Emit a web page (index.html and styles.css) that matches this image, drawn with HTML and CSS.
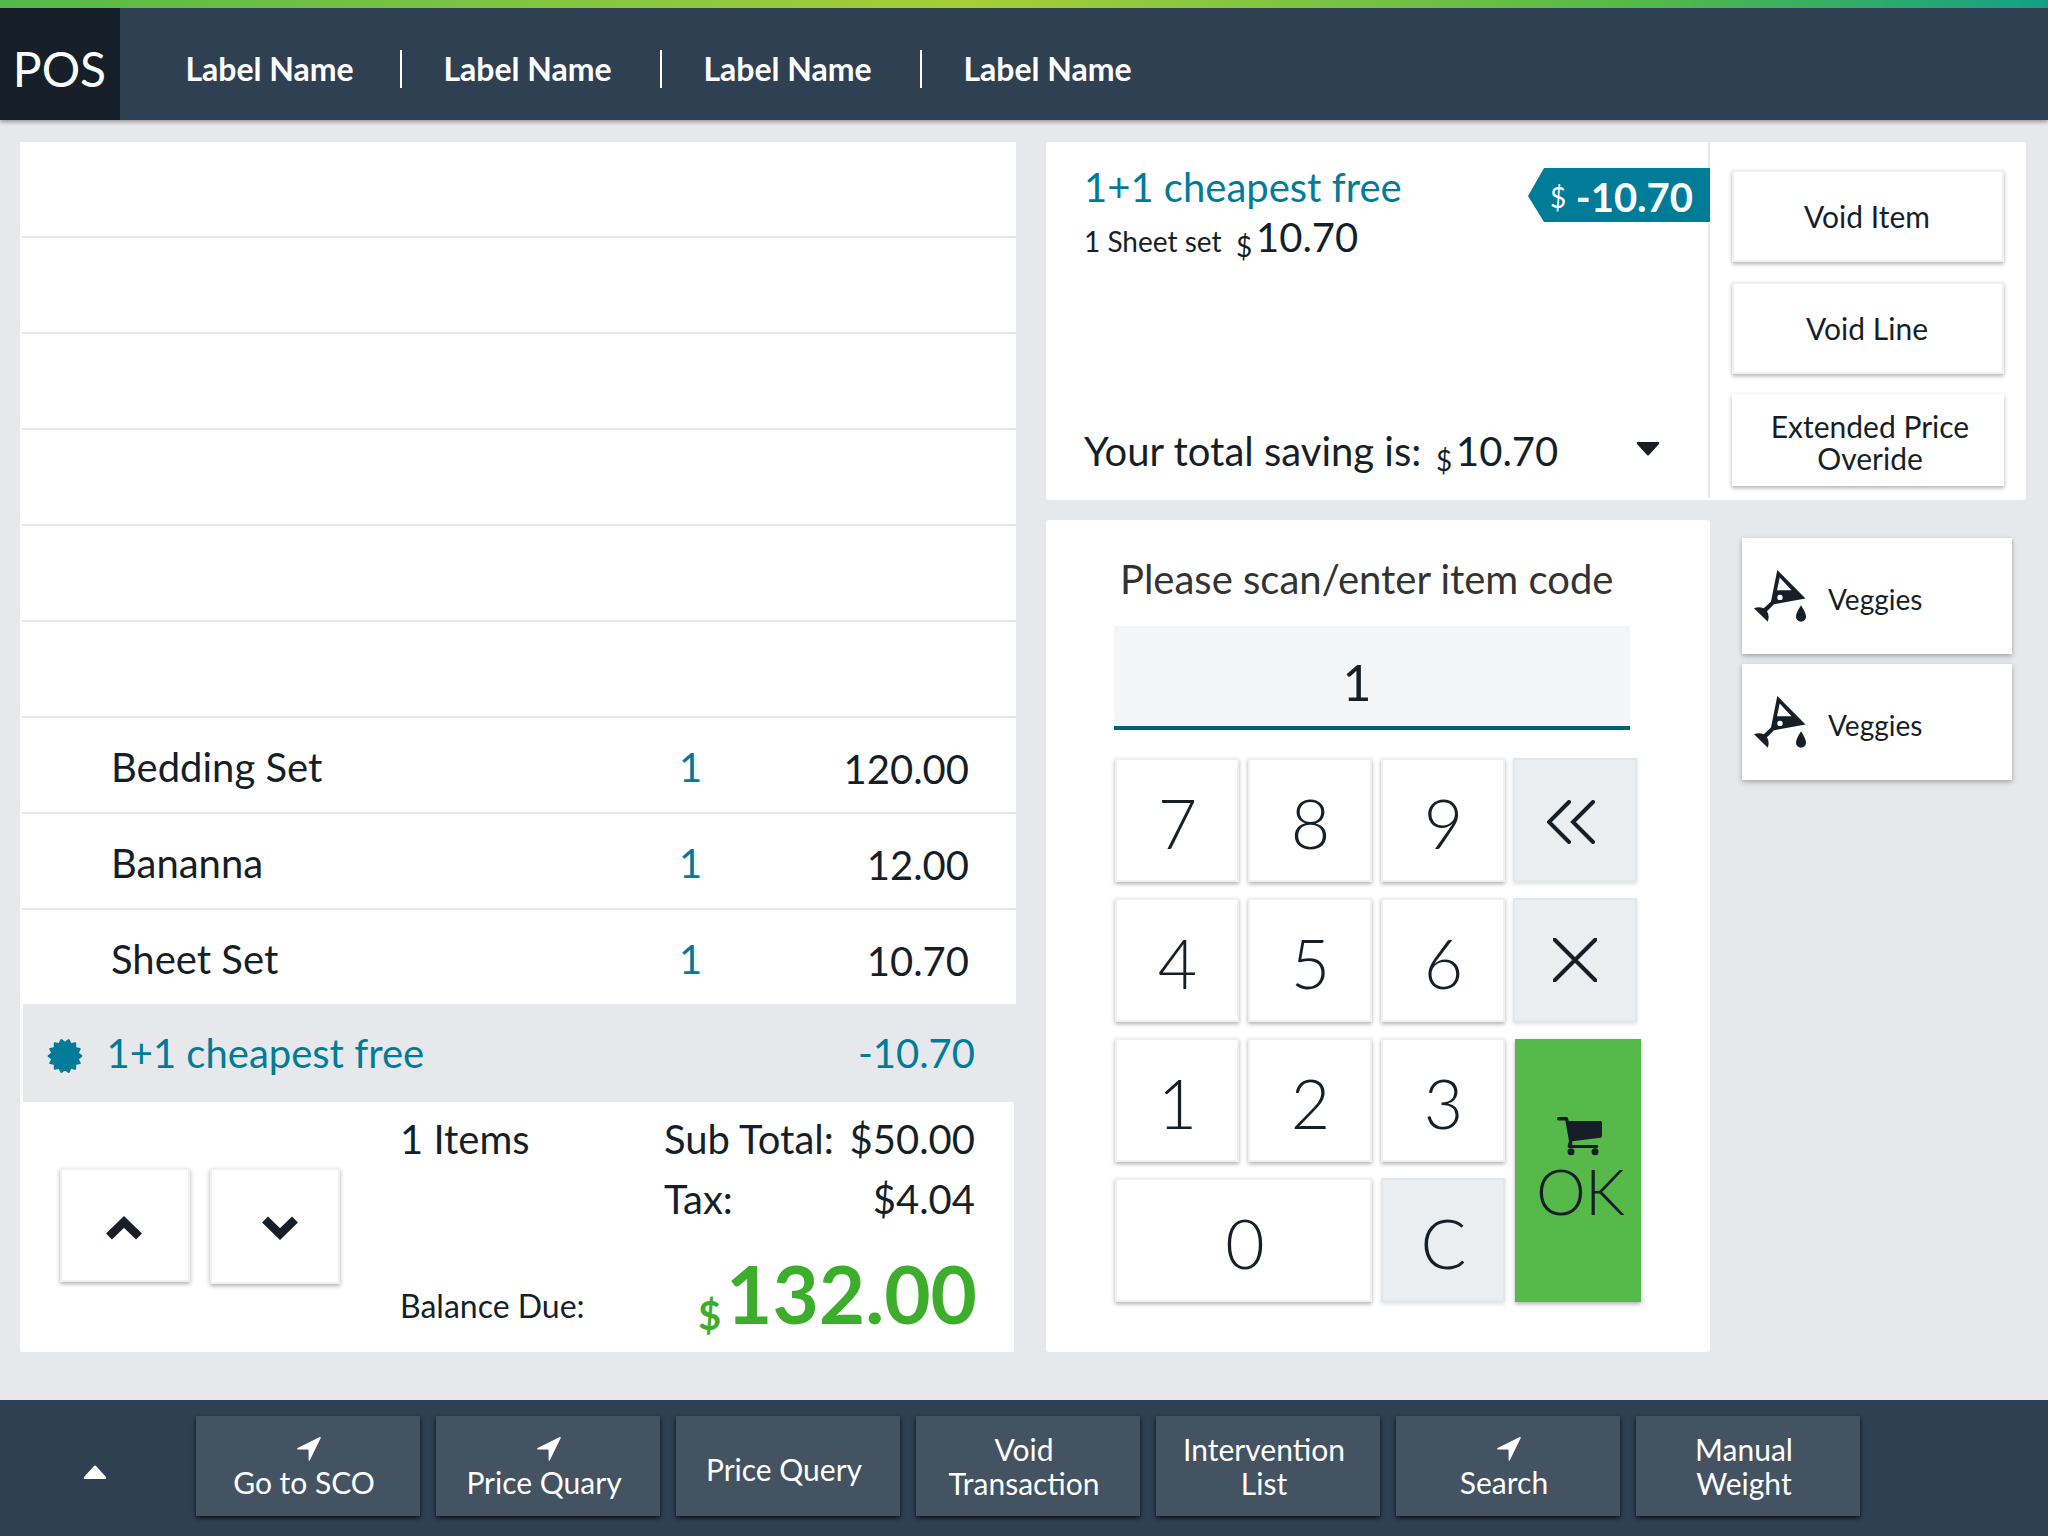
FILE: index.html
```
<!DOCTYPE html>
<html lang="en">
<head>
<meta charset="utf-8">
<title>POS</title>
<link rel="stylesheet" href="styles.css">
</head>
<body>
<svg class="defs" width="0" height="0" aria-hidden="true">
  <symbol id="arrow" viewBox="0 0 24 24"><path d="M23.800 .8 12.900 23.200Q12.200 24.200 11.600 23.200V13.300Q11.600 12.500 10.800 12.500H.9Q-.4 12 .6 11.100L22.800 .1Q24 -.2 23.800 .8Z"/></symbol>
  <symbol id="glass" viewBox="0 0 52 52">
    <path fill-rule="evenodd" d="M23.300 0 51.500 28.400 20 34.300 13 41.300Q15.800 46 13.800 51.700L0 38.200Q5 36.300 9.800 38.300L17 31.500ZM25.700 7.500 23 20.300H37.500ZM26 24.700A2.700 2.700 0 1 0 26 30.100A2.700 2.700 0 1 0 26 24.700Z"/>
    <path d="M47 35.300Q52 43 52 46.800A5 5 0 0 1 42 46.800Q42 43 47 35.300Z"/>
  </symbol>
</svg>

<header class="header">
  <div class="brand">POS</div>
  <nav class="nav">
    <a class="nav-item">Label Name</a>
    <a class="nav-item">Label Name</a>
    <a class="nav-item">Label Name</a>
    <a class="nav-item">Label Name</a>
  </nav>
</header>

<main class="main">
  <section class="receipt">
    <div class="lines">
      <div class="line"></div>
      <div class="line"></div>
      <div class="line"></div>
      <div class="line"></div>
      <div class="line"></div>
      <div class="line"></div>
      <div class="line"><span class="name">Bedding Set</span><span class="qty">1</span><span class="price">120.00</span></div>
      <div class="line"><span class="name">Bananna</span><span class="qty">1</span><span class="price">12.00</span></div>
      <div class="line last"><span class="name">Sheet Set</span><span class="qty">1</span><span class="price">10.70</span></div>
    </div>
    <div class="promo">
      <svg class="burst" width="36" height="36" viewBox="-18 -18 36 36"><path id="burst" d=""/></svg>
      <span class="promo-name">1+1 cheapest free</span>
      <span class="promo-price">-10.70</span>
    </div>
    <div class="summary">
      <div class="scroll">
        <button class="btn up"><svg width="38" height="26" viewBox="0 0 38 26"><path d="M4 21.500 19 7 34 21.500"/></svg></button>
        <button class="btn down"><svg width="38" height="26" viewBox="0 0 38 26"><path d="M4 4.500 19 19 34 4.500"/></svg></button>
      </div>
      <div class="totals">
        <div class="total-row"><span class="items">1 Items</span><span>Sub Total:</span><span class="amount">$50.00</span></div>
        <div class="total-row tax"><span class="items"></span><span>Tax:</span><span class="amount">$4.04</span></div>
        <div class="balance"><span class="balance-label">Balance Due:</span><span class="balance-cur">$</span><span class="balance-value">132.00</span></div>
      </div>
    </div>
  </section>

  <section class="workspace">
    <div class="top-panel">
      <div class="savings">
        <div class="tag"><span class="tag-cur">$</span><span class="tag-value">-10.70</span></div>
        <div class="offer">1+1 cheapest free</div>
        <div class="offer-detail"><span class="small">1 Sheet set</span><span class="cur">$</span><span>10.70</span></div>
        <div class="saving-total"><span class="saving-label">Your total saving is:</span><span class="cur">$</span><span>10.70</span>
          <svg class="caret" width="24" height="14" viewBox="0 0 24 14"><path d="M1.500 0H22.500Q24 .5 23 2L13 13Q12 14 11 13L1 2Q0 .5 1.500 0Z"/></svg></div>
      </div>
      <div class="actions">
        <button class="btn action">Void Item</button>
        <button class="btn action">Void Line</button>
        <button class="btn action plain">Extended Price<br>Overide</button>
      </div>
    </div>

    <div class="bottom-area">
      <div class="entry">
        <div class="entry-title">Please scan/enter item code</div>
        <div class="entry-input">1</div>
        <div class="keypad">
          <button class="btn key">7</button>
          <button class="btn key">8</button>
          <button class="btn key">9</button>
          <button class="btn key alt back"><svg width="48" height="44" viewBox="0 0 48 44"><path d="M22 2 2 22 22 42M46 2 26 22 46 42"/></svg></button>
          <button class="btn key">4</button>
          <button class="btn key">5</button>
          <button class="btn key">6</button>
          <button class="btn key alt cross"><svg width="44" height="44" viewBox="0 0 44 44"><path d="M1.500 1.500 42.500 42.500M42.500 1.500 1.500 42.500"/></svg></button>
          <button class="btn key">1</button>
          <button class="btn key">2</button>
          <button class="btn key">3</button>
          <button class="ok">
            <svg width="46" height="39" viewBox="0 0 46 39"><path d="M1.500 0H9.500Q10.500 0 11 1L11.800 4H43.500Q45 4 45 5.500V19Q45 20.500 43.500 20.700L15.300 24.300V28H40Q41.200 28 41.200 29.500T40 31H12Q10.500 31 10.600 29L12 24 8.300 3.600H1.500Q0 3.600 0 1.800T1.500 0Z"/><circle cx="14" cy="34.800" r="3.500"/><circle cx="38" cy="34.800" r="3.500"/></svg>
            <span>OK</span>
          </button>
          <button class="btn key zero">0</button>
          <button class="btn key alt letter">C</button>
        </div>
      </div>
      <div class="shortcuts">
        <button class="shortcut"><svg width="52" height="52"><use href="#glass"/></svg><span>Veggies</span></button>
        <button class="shortcut"><svg width="52" height="52"><use href="#glass"/></svg><span>Veggies</span></button>
      </div>
    </div>
  </section>
</main>

<footer class="footer">
  <div class="menu-toggle"><svg width="24" height="14" viewBox="0 0 24 14"><path d="M1.500 14H22.500Q24 13.500 23 12L13 1Q12 0 11 1L1 12Q0 13.500 1.500 14Z"/></svg></div>
  <button class="foot-btn"><svg width="24" height="24"><use href="#arrow"/></svg><span>Go to SCO</span></button>
  <button class="foot-btn"><svg width="24" height="24"><use href="#arrow"/></svg><span>Price Quary</span></button>
  <button class="foot-btn single"><span>Price Query</span></button>
  <button class="foot-btn"><span>Void<br>Transaction</span></button>
  <button class="foot-btn"><span>Intervention<br>List</span></button>
  <button class="foot-btn"><svg width="24" height="24"><use href="#arrow"/></svg><span>Search</span></button>
  <button class="foot-btn"><span>Manual<br>Weight</span></button>
</footer>
<script src="burst.js"></script>
</body>
</html>
```
FILE: burst.js
```
// Builds the promotion badge: a disc with fourteen rounded teeth.
const teeth = 14;
let d = "";
for (let i = 0; i < teeth * 2; i++) {
  const r = i % 2 ? 16.4 : 13;
  const a = (i * Math.PI) / teeth;
  d += (i ? "L" : "M") + (r * Math.sin(a)).toFixed(2) + " " + (-r * Math.cos(a)).toFixed(2);
}
document.getElementById("burst").setAttribute("d", d + "Z");
```
FILE: styles.css
```
* { box-sizing: border-box; }
body {
  margin: 0;
  width: 2048px;
  height: 1536px;
  overflow: hidden;
  display: flex;
  flex-direction: column;
  background: #e6e8eb;
  color: #161f28;
  font-family: Lato, "Liberation Sans", sans-serif;
  font-size: 40px;
  line-height: 48px;
}
button {
  font: inherit;
  color: inherit;
  border: 0;
  border-radius: 0;
  padding: 0;
  background: #fff;
}
.defs { position: absolute; }

/* Header */
.header {
  height: 120px;
  flex: none;
  padding-top: 8px;
  display: flex;
  background:
    linear-gradient(90deg, #54b948 0%, #a5ce39 47%, #a5ce39 47.500%, #54b948 80%, #12a085 100%) 0 0 / 100% 8px no-repeat,
    #2f4052;
  box-shadow: 0 2px 4px rgba(0, 0, 0, .35);
  color: #fff;
}
.brand {
  width: 120px;
  padding: 5px 1px 0 0;
  background: #161f28;
  font-size: 48px;
  line-height: 112px;
  text-align: center;
}
.nav { display: flex; padding: 42px 0 0 22px; }
.nav-item {
  width: 260px;
  height: 38px;
  padding-left: 43.500px;
  font-size: 32px;
  font-weight: 700;
  line-height: 37px;
}
.nav-item + .nav-item { border-left: 2px solid #fff; padding-left: 41.500px; }
.nav-item:first-child { width: 258px; }

/* Main */
.main {
  height: 1280px;
  flex: none;
  padding: 22px 22px 48px 20px;
  display: grid;
  grid-template-columns: 996px 980px;
  gap: 30px;
}
.receipt { height: 1210px; display: flex; flex-direction: column; }
.lines { background: #fff; padding-left: 2px; }
.line {
  height: 96px;
  border-bottom: 2px solid #e6e8eb;
  padding: 4px 47px 0 89px;
  display: grid;
  grid-template-columns: 568px 80px 1fr;
  line-height: 91px;
}
.line.last { height: 94px; border-bottom: 0; }
.qty { color: #007c99; }
.price { text-align: right; padding-top: 2px; }
.promo {
  height: 98px;
  border-left: 3px solid #fff;
  display: flex;
  align-items: center;
  padding: 0 41px 0 24px;
  color: #007c99;
}
.burst { margin-right: 23.500px; margin-top: 5px; fill: currentColor; stroke: currentColor; stroke-width: 2; stroke-linejoin: round; }
.promo-price { margin-left: auto; }
.summary {
  width: 994px;
  height: 250px;
  background: #fff;
  border-radius: 2px;
  display: flex;
}
.btn {
  background: #fff;
  border: 2px solid #f0f0f0;
  box-shadow: 0 2px 4px rgba(22, 31, 40, .35);
}
.scroll { width: 380px; padding: 66px 0 0 40px; display: flex; gap: 20px; align-items: flex-start; }
.scroll .btn { width: 130px; height: 114px; padding: 2px 3px 0 0; }
.scroll .btn.down { height: 116px; padding: 0 0 0 10px; }
.scroll svg { display: block; margin: 3px auto 0; }
.scroll path { fill: none; stroke: #161f28; stroke-width: 8.500; stroke-linejoin: miter; stroke-linecap: butt; }
.totals { flex: 1; padding: 13px 39px 0 0; }
.total-row { display: grid; grid-template-columns: 264px 180px 1fr; height: 60px; }
.amount { text-align: right; }
.balance { display: flex; }
.balance-label { width: 298px; padding-top: 53px; font-size: 32px; line-height: 36px; white-space: nowrap; }
.balance-cur { color: #3dae2b; padding-top: 56px; font-weight: 700; }
.balance-value { margin: 0 -2px 0 auto; color: #3dae2b; font-size: 80px; font-weight: 700; line-height: 96px; padding-top: 10px; }

/* Savings */
.workspace { display: flex; flex-direction: column; gap: 20px; }
.top-panel { height: 358px; background: #fff; border-radius: 3px; display: flex; }
.savings {
  position: relative;
  width: 664px;
  height: 356px;
  padding: 21px 0 0 38px;
  border-right: 2px solid #e6e8eb;
}
.tag {
  position: absolute;
  top: 26px;
  right: -2px;
  width: 182px;
  height: 54px;
  padding: 4px 17px 0 22px;
  display: flex;
  justify-content: space-between;
  background: #007c99;
  clip-path: polygon(16px 0, 100% 0, 100% 100%, 16px 100%, 0 52%);
  color: #fff;
}
.tag-cur { font-size: 28px; line-height: 50px; }
.tag-value { font-weight: 700; line-height: 50px; }
.offer { color: #007c99; }
.offer-detail, .saving-total { display: flex; }
.offer-detail { padding-top: 2px; }
.small { font-size: 28px; line-height: 57px; width: 152px; }
.cur { font-size: 28px; line-height: 66px; width: 20px; }
.saving-label { width: 352px; }
.saving-total { height: 48px; margin-top: 148px; }
.caret { margin: 15px 0 0 78px; fill: #161f28; }
.actions { padding: 28px 0 0 22px; display: flex; flex-direction: column; gap: 20px; font-size: 30px; line-height: 32px; }
.action { width: 272px; height: 92px; padding: 0 2px 0 0; }
.action.plain { border-color: #fff; padding: 4px 0 0 4px; }

/* Entry */
.bottom-area { display: flex; gap: 32px; }
.entry { width: 664px; height: 832px; background: #fff; border-radius: 3px; padding: 35px 68px 0; }
.entry-title { color: #333; padding-left: 6px; height: 71px; white-space: nowrap; }
.entry-input {
  width: 516px;
  height: 104px;
  padding: 10px 30px 0 0;
  background: #f3f5f7;
  border-bottom: 4px solid #006372;
  font-size: 50px;
  line-height: 92px;
  text-align: center;
}
.keypad {
  margin: 28px 0 0 1px;
  display: grid;
  grid-template-columns: repeat(4, 124px);
  grid-auto-rows: 124px;
  gap: 16px 9px;
}
.key { font-size: 68px; font-weight: 300; padding: 5px 0 0 1px; }
.key svg { display: block; margin: -5px auto 0; fill: none; stroke: #161f28; stroke-width: 4; stroke-linecap: round; }
.key.alt { background: #eaeef1; border-color: #e3e7ea; box-shadow: 0 2px 4px rgba(22, 31, 40, .15); padding-left: 0; }
.key.alt.letter { padding-left: 1px; }
.key.alt.back { margin: 0 1px 0 -1px; padding: 8px 9px 0 0; }
.key.alt.cross { margin: 0 1px 0 -1px; padding-right: 1px; }
.zero { grid-column: span 2; padding-left: 3px; }
.ok {
  grid-row: span 2;
  width: 126px;
  margin: 1px 0 0 1px;
  padding: 0 0 2px 4px;
  background: #56b949;
  box-shadow: 0 2px 4px rgba(22, 31, 40, .35);
  font-size: 63px;
  font-weight: 300;
  letter-spacing: -1px;
  line-height: 64px;
}
.ok svg { display: block; margin: 0 auto 3px; fill: #161f28; }
.ok span { display: block; }

/* Shortcuts */
.shortcuts { padding-top: 18px; display: flex; flex-direction: column; gap: 10px; }
.shortcut {
  width: 270px;
  height: 116px;
  padding-left: 12px;
  display: flex;
  align-items: center;
  box-shadow: 0 2px 5px rgba(0, 0, 0, .3);
  font-size: 28px;
}
.shortcut svg { margin-right: 22px; fill: #161f28; }
.shortcut span { padding-top: 6px; }

/* Footer */
.footer { height: 136px; flex: none; background: #2f4052; display: flex; gap: 16px; padding-top: 16px; color: #fff; }
.menu-toggle { width: 180px; padding: 48px 0 0 83px; line-height: 0; fill: #fff; }
.foot-btn {
  width: 224px;
  height: 100px;
  padding-bottom: 1px;
  background: #445361;
  box-shadow: 0 2px 4px rgba(0, 0, 0, .8);
  font-size: 30px;
  line-height: 34px;
}
.foot-btn.single { padding: 5px 0 0; }
.foot-btn svg { display: block; margin: 4px auto 4px 101px; fill: #fff; }
.foot-btn span { display: block; padding-right: 8px; }
```
